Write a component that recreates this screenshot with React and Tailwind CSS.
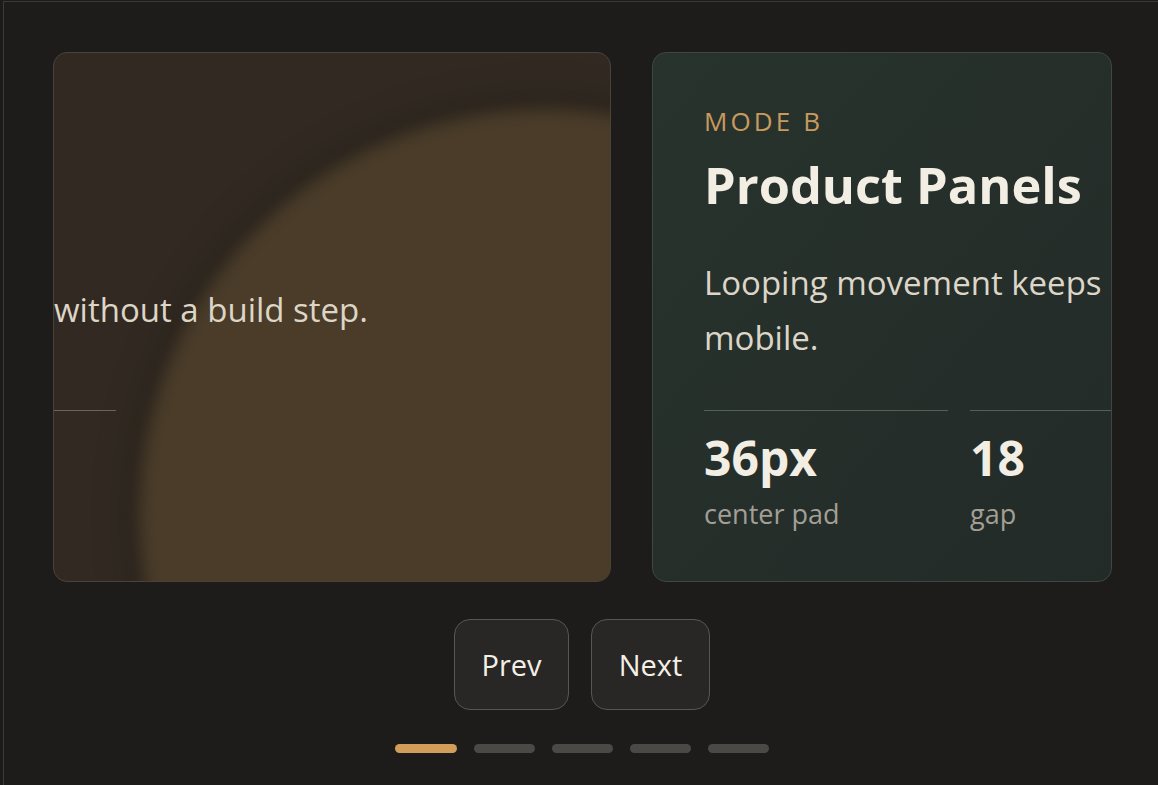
export default function App() {
  const font = { fontFamily: '"Open Sans", "Noto Sans", sans-serif' };
  return (
    <div className="w-[1158px] h-[785px] overflow-hidden bg-[#1c1b19] pt-[1px] pl-[3px]" style={font}>
      <div className="w-[1158px] h-[800px] border border-[#3b3a37] bg-[#1d1c1a] pl-[49px] pt-[50px]">
        <div className="flex gap-[41px]">
          {/* Left card */}
          <div className="relative w-[558px] h-[530px] shrink-0 overflow-hidden rounded-[14px] border border-[#4a4237] bg-[#322a22]">
            <div className="absolute left-[85px] top-[56px] w-[812px] h-[812px] rounded-full bg-[#4a3c29] blur-[8px] shadow-[0_0_40px_rgba(0,0,0,0.4)]" />
            <div className="relative pt-[229px]">
              <p className="text-[33px] leading-[55px] text-[#ddd5c6] whitespace-nowrap">without a build step.</p>
              <div className="mt-[73px] w-[62px] border-t border-[#6a645a]" />
            </div>
          </div>
          {/* Right card */}
          <div className="relative w-[460px] h-[530px] shrink-0 overflow-hidden rounded-[14px] border border-[#3d4842] bg-gradient-to-br from-[#29332e] to-[#222b27] pl-[51px] pt-[55px]">
            <div className="text-[26px] leading-[26px] tracking-[0.12em] text-[#c99a5d] whitespace-nowrap">MODE B</div>
            <h2 className="mt-[21px] text-[50.5px] leading-[60px] font-bold text-[#f3eee4] whitespace-nowrap">Product Panels</h2>
            <p className="mt-[40px] text-[33px] leading-[55px] text-[#ddd6c8] whitespace-nowrap">
              Looping movement keeps
              <br />
              mobile.
            </p>
            <div className="mt-[45px] flex gap-[22px] w-[600px]">
              <div className="w-[244px] shrink-0 border-t border-[#56605a] pt-[19px]">
                <div className="text-[48px] leading-[56px] font-bold text-[#f3eee4]">36px</div>
                <div className="mt-[10px] text-[27px] leading-[36px] text-[#a29f96]">center pad</div>
              </div>
              <div className="w-[244px] shrink-0 border-t border-[#56605a] pt-[19px]">
                <div className="text-[48px] leading-[56px] font-bold text-[#f3eee4]">18</div>
                <div className="mt-[10px] text-[27px] leading-[36px] text-[#a29f96]">gap</div>
              </div>
            </div>
          </div>
        </div>
        {/* Controls */}
        <div className="w-[1058px] mt-[37px] flex justify-center gap-[22px]">
          <button className="w-[115px] h-[91px] rounded-[16px] border border-[#58564f] bg-[#282725] text-[29px] text-[#f5f0e6]">Prev</button>
          <button className="w-[119px] h-[91px] rounded-[16px] border border-[#58564f] bg-[#282725] text-[29px] text-[#f5f0e6]">Next</button>
        </div>
        <div className="w-[1058px] mt-[34px] flex justify-center gap-[17px]">
          <div className="w-[62px] h-[9px] rounded-full bg-[#d19d58]" />
          <div className="w-[61px] h-[9px] rounded-full bg-[#4a4946]" />
          <div className="w-[61px] h-[9px] rounded-full bg-[#4a4946]" />
          <div className="w-[61px] h-[9px] rounded-full bg-[#4a4946]" />
          <div className="w-[61px] h-[9px] rounded-full bg-[#4a4946]" />
        </div>
      </div>
    </div>
  );
}
